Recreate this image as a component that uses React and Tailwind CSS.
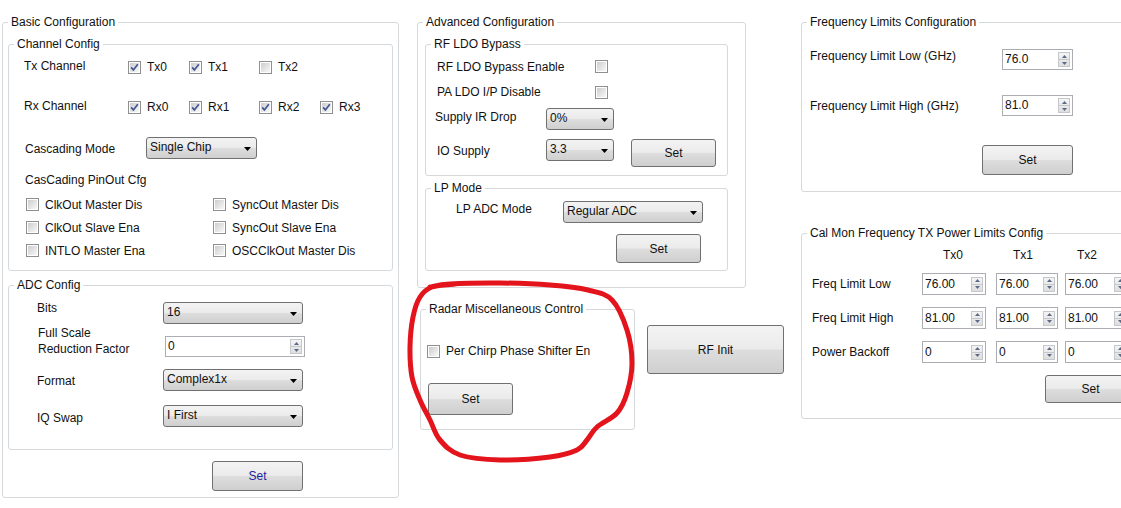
import React from "react";

const btnBg =
  "bg-[linear-gradient(to_bottom,#f3f3f3_0%,#ebebeb_48%,#dddddd_52%,#cfcfcf_100%)]";

const Group = ({ title, className = "", children }) => (
  <fieldset className={`border border-[#d5d9dc] rounded-[3px] ${className}`}>
    <legend className="ml-[5px] px-[3px] leading-[14px]">{title}</legend>
    {children}
  </fieldset>
);

const Check = ({ checked }) => (
  <span className="relative inline-flex shrink-0 w-[13px] h-[13px] border border-[#8e8f8f] bg-white p-[1px]">
    <span className="block w-full h-full bg-[linear-gradient(135deg,#cdcdcd,#f8f8f8)]" />
    {checked && (
      <svg className="absolute left-0 top-0" width="11" height="11" viewBox="0 0 11 11">
        <path d="M2.2 5.4 L4.4 8 L8.8 2.2" stroke="#3f5592" strokeWidth="1.7" fill="none" />
      </svg>
    )}
  </span>
);

const Combo = ({ value, className = "" }) => (
  <div
    className={`flex items-center justify-between shrink-0 h-[22px] border border-[#707070] rounded-[3px] pl-[3px] pr-[5px] ${btnBg} ${className}`}
  >
    <span className="-mt-[2px]">{value}</span>
    <svg width="7" height="4" viewBox="0 0 7 4" className="mt-[1px]">
      <path d="M0 0h7L3.5 4z" fill="#000" />
    </svg>
  </div>
);

const Btn = ({ children, className = "", text = "text-[#111]" }) => (
  <div
    className={`flex items-center justify-center shrink-0 border border-[#707070] rounded-[3px] ${btnBg} ${text} ${className}`}
  >
    {children}
  </div>
);

const Spin = ({ value, className = "h-[21px]" }) => (
  <div
    className={`flex items-center justify-between shrink-0 border border-[#abadb3] bg-white pl-[2px] pr-[2px] ${className}`}
  >
    <span className="-mt-[1px]">{value}</span>
    <div className="flex flex-col w-[12px] h-[15px] border border-[#c4c8cc] bg-[linear-gradient(to_bottom,#f4f4f4,#dedede)]">
      <div className="flex-1 flex items-center justify-center">
        <svg width="5" height="3" viewBox="0 0 5 3">
          <path d="M0 3h5L2.5 0z" fill="#5a6a88" />
        </svg>
      </div>
      <div className="h-px bg-[#c4c8cc]" />
      <div className="flex-1 flex items-center justify-center">
        <svg width="5" height="3" viewBox="0 0 5 3">
          <path d="M0 0h5L2.5 3z" fill="#5a6a88" />
        </svg>
      </div>
    </div>
  </div>
);

const Item = ({ label, checked, className = "" }) => (
  <div className={`flex items-center ${className}`}>
    <Check checked={checked} />
    <span className="ml-[6px]">{label}</span>
  </div>
);

// hand drawn marker loop around the radar box
const loop = [
  [430, 287], [450, 284], [500, 283], [550, 285], [588, 290], [612, 300],
  [627, 330], [632, 363], [627, 393], [617, 413], [597, 427], [587, 440],
  [577, 450], [550, 457], [500, 460], [460, 455], [440, 440], [430, 420],
  [420, 400], [412, 377], [410, 347], [413, 317], [420, 297], [432, 287],
  [455, 284],
];

const smooth = (pts) => {
  let d = `M${pts[0][0]} ${pts[0][1]}`;
  for (let i = 0; i < pts.length - 1; i++) {
    const p0 = pts[i - 1] || pts[i];
    const p1 = pts[i];
    const p2 = pts[i + 1];
    const p3 = pts[i + 2] || p2;
    const c1 = [p1[0] + (p2[0] - p0[0]) / 6, p1[1] + (p2[1] - p0[1]) / 6];
    const c2 = [p2[0] - (p3[0] - p1[0]) / 6, p2[1] - (p3[1] - p1[1]) / 6];
    d += ` C${c1[0]} ${c1[1]} ${c2[0]} ${c2[1]} ${p2[0]} ${p2[1]}`;
  }
  return d;
};

const App = () => {
  return (
    <div className="relative w-[1121px] h-[508px] overflow-hidden bg-white text-[#111] text-[12px] leading-[14px] font-['Liberation_Sans',Arial,sans-serif]">
      <div className="flex items-start">
        {/* Basic Configuration */}
        <div className="ml-[2px] w-[397px] mt-[15px]">
          <Group title="Basic Configuration" className="w-[397px] h-[483px]">
            <div className="pt-[8px] pl-[5px]">
              <Group title="Channel Config" className="w-[385px] h-[234px]">
                <div className="pt-[6px]">
                  <div className="flex items-center h-[20px]">
                    <div className="w-[119px] pl-[15px] -mt-[2px]">Tx Channel</div>
                    <Item label="Tx0" checked className="w-[61px]" />
                    <Item label="Tx1" checked className="w-[70px]" />
                    <Item label="Tx2" className="w-[61px]" />
                  </div>
                  <div className="flex items-center h-[20px] mt-[20px]">
                    <div className="w-[119px] pl-[15px] -mt-[2px]">Rx Channel</div>
                    <Item label="Rx0" checked className="w-[61px]" />
                    <Item label="Rx1" checked className="w-[70px]" />
                    <Item label="Rx2" checked className="w-[61px]" />
                    <Item label="Rx3" checked />
                  </div>
                  <div className="flex items-center h-[22px] mt-[20px]">
                    <div className="w-[137px] pl-[16px] mt-[1px]">Cascading Mode</div>
                    <Combo value="Single Chip" className="w-[111px]" />
                  </div>
                  <div className="h-[14px] mt-[14px] pl-[16px]">CasCading PinOut Cfg</div>
                  <div className="mt-[6px]">
                    <div className="flex items-center h-[23px]">
                      <Item label="ClkOut Master Dis" className="w-[204px] pl-[17px]" />
                      <Item label="SyncOut Master Dis" />
                    </div>
                    <div className="flex items-center h-[23px]">
                      <Item label="ClkOut Slave Ena" className="w-[204px] pl-[17px]" />
                      <Item label="SyncOut Slave Ena" />
                    </div>
                    <div className="flex items-center h-[23px]">
                      <Item label="INTLO Master Ena" className="w-[204px] pl-[17px]" />
                      <Item label="OSCClkOut Master Dis" />
                    </div>
                  </div>
                </div>
              </Group>

              <Group title="ADC Config" className="w-[385px] h-[172px] mt-[7px]">
                <div className="flex items-start h-[24px] mt-[9px]">
                  <div className="w-[154px] pl-[28px]">Bits</div>
                  <Combo value="16" className="w-[140px] mt-[1px]" />
                </div>
                <div className="flex items-start h-[32px]">
                  <div className="w-[156px] pl-[29px] leading-[16px]">
                    Full Scale
                    <br />
                    Reduction Factor
                  </div>
                  <Spin value="0" className="w-[140px] h-[21px] mt-[11px]" />
                </div>
                <div className="flex items-start h-[24px] mt-[12px]">
                  <div className="w-[154px] pl-[28px] mt-[5px]">Format</div>
                  <Combo value="Complex1x" className="w-[140px]" />
                </div>
                <div className="flex items-start h-[24px] mt-[12px]">
                  <div className="w-[154px] pl-[28px] mt-[6px]">IQ Swap</div>
                  <Combo value="I First" className="w-[140px]" />
                </div>
              </Group>

              <Btn className="ml-[204px] mt-[11px] w-[91px] h-[30px]" text="text-[#1e1e9e]">
                Set
              </Btn>
            </div>
          </Group>
        </div>

        {/* Advanced Configuration + Radar */}
        <div className="ml-[18px] w-[367px]">
          <Group title="Advanced Configuration" className="w-[329px] h-[273px] mt-[15px]">
            <div className="pt-[8px] pl-[7px]">
              <Group title="RF LDO Bypass" className="w-[303px] h-[139px]">
                <div className="flex items-center h-[18px] mt-[6px]">
                  <div className="w-[169px] pl-[11px] mt-[2px]">RF LDO Bypass Enable</div>
                  <Check />
                </div>
                <div className="flex items-center h-[18px] mt-[8px]">
                  <div className="w-[169px] pl-[11px]">PA LDO I/P Disable</div>
                  <Check />
                </div>
                <div className="flex items-start h-[22px] mt-[7px]">
                  <div className="w-[120px] pl-[9px] mt-[2px]">Supply IR Drop</div>
                  <Combo value="0%" className="w-[68px]" />
                </div>
                <div className="flex items-start mt-[9px]">
                  <div className="w-[120px] pl-[11px] mt-[5px]">IO Supply</div>
                  <Combo value="3.3" className="w-[68px]" />
                  <Btn className="ml-[17px] w-[85px] h-[28px]">Set</Btn>
                </div>
              </Group>

              <Group title="LP Mode" className="w-[303px] h-[90px] mt-[5px]">
                <div className="flex items-start mt-[6px]">
                  <div className="w-[137px] pl-[30px] mt-[1px]">LP ADC Mode</div>
                  <Combo value="Regular ADC" className="w-[140px]" />
                </div>
                <Btn className="mt-[11px] ml-[190px] w-[85px] h-[29px]">Set</Btn>
              </Group>
            </div>
          </Group>

          <div className="flex items-start mt-[14px]">
            <Group title="Radar Miscellaneous Control" className="ml-[3px] w-[215px] h-[128px]">
              <div className="flex items-center h-[18px] mt-[26px] pl-[6px]">
                <Check />
                <span className="ml-[6px]">Per Chirp Phase Shifter En</span>
              </div>
              <Btn className="mt-[23px] ml-[7px] w-[85px] h-[32px]">Set</Btn>
            </Group>
            <Btn className="ml-[12px] mt-[23px] w-[137px] h-[49px]">RF Init</Btn>
          </div>
        </div>

        {/* Frequency limits */}
        <div className="ml-[17px] w-[340px] mt-[15px] shrink-0">
          <Group title="Frequency Limits Configuration" className="w-[340px] h-[177px]">
            <div className="flex items-start h-[21px] mt-[20px]">
              <div className="w-[200px] pl-[8px]">Frequency Limit Low (GHz)</div>
              <Spin value="76.0" className="w-[71px] h-[21px]" />
            </div>
            <div className="flex items-start h-[21px] mt-[25px]">
              <div className="w-[200px] pl-[8px] mt-[4px]">Frequency Limit High (GHz)</div>
              <Spin value="81.0" className="w-[71px] h-[21px]" />
            </div>
            <Btn className="mt-[29px] ml-[180px] w-[91px] h-[30px]">Set</Btn>
          </Group>

          <Group title="Cal Mon Frequency TX Power Limits Config" className="w-[340px] h-[193px] mt-[34px]">
            <div className="flex h-[14px] mt-[8px] pl-[141px]">
              <span className="w-[70px]">Tx0</span>
              <span className="w-[64px]">Tx1</span>
              <span>Tx2</span>
            </div>
            {[
              ["Freq Limit Low", "76.00"],
              ["Freq Limit High", "81.00"],
              ["Power Backoff", "0"],
            ].map(([label, v], i) => (
              <div
                key={label}
                className={`flex items-center h-[22px] ${i === 0 ? "mt-[11px]" : "mt-[12px]"}`}
              >
                <div className="w-[120px] pl-[10px]">{label}</div>
                <Spin value={v} className="w-[64px] h-[22px]" />
                <Spin value={v} className="ml-[10px] w-[62px] h-[22px]" />
                <Spin value={v} className="ml-[7px] w-[64px] h-[22px]" />
              </div>
            ))}
            <Btn className="mt-[12px] ml-[243px] w-[91px] h-[28px]">Set</Btn>
          </Group>
        </div>
      </div>

      <svg
        className="absolute left-0 top-0 pointer-events-none"
        width="1121"
        height="508"
        viewBox="0 0 1121 508"
      >
        <path
          d={smooth(loop)}
          stroke="#e3141b"
          strokeWidth="5"
          fill="none"
          strokeLinecap="round"
          strokeLinejoin="round"
        />
      </svg>
    </div>
  );
};

export default App;
